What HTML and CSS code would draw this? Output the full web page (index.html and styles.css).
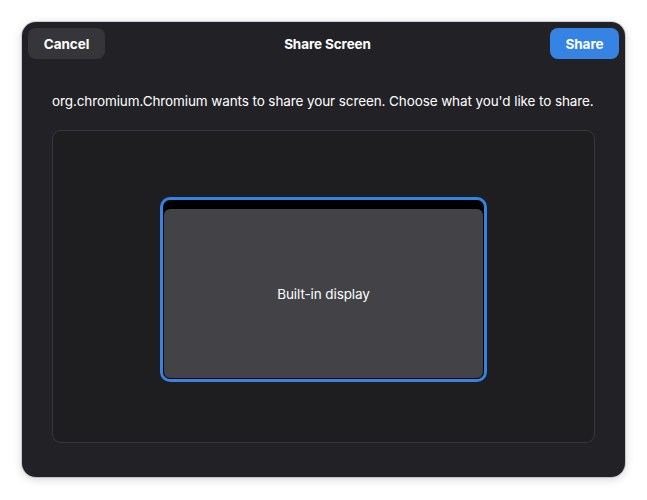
FILE: index.html
```html
<!DOCTYPE html>
<html>
<head>
<meta charset="utf-8">
<link rel="stylesheet" href="styles.css">
</head>
<body>
<div class="dialog">
  <header class="header">
    <button class="btn btn-cancel">Cancel</button>
    <div class="title">Share Screen</div>
    <button class="btn btn-share">Share</button>
  </header>
  <div class="content">
    <p class="message">org.chromium.Chromium wants to share your screen. Choose what you'd like to share.</p>
    <div class="sources">
      <div class="monitor">
        <div class="screen">Built-in display</div>
      </div>
    </div>
  </div>
</div>
</body>
</html>
```
FILE: styles.css
```css
html, body {
  margin: 0;
  padding: 0;
  background: #ffffff;
}
body {
  font-family: "Inter", "Noto Sans", sans-serif;
  width: 647px;
  height: 500px;
  overflow: hidden;
}
.dialog {
  box-sizing: border-box;
  margin: 22px 0 0 22px;
  width: 603px;
  height: 455px;
  background: #222226;
  border-radius: 14px;
  box-shadow: 0 0 0 1px rgba(0,0,0,0.14), 0 2px 10px rgba(0,0,0,0.18);
  display: flex;
  flex-direction: column;
  color: #ffffff;
}
.header {
  display: flex;
  align-items: center;
  justify-content: space-between;
  padding: 6px;
  height: 43px;
  box-sizing: border-box;
}
.btn {
  height: 31px;
  border: none;
  border-radius: 8px;
  font-family: "Inter", "Noto Sans", sans-serif;
  font-weight: 700;
  font-size: 13.5px;
  letter-spacing: -0.05px;
  color: #ffffff;
  padding: 0;
}
.btn-cancel {
  background: #36363a;
  width: 77px;
}
.btn-share {
  background: #3584e4;
  width: 69px;
}
.title {
  font-weight: 700;
  font-size: 13.5px;
  letter-spacing: -0.1px;
}
.content {
  flex: 1;
  display: flex;
  flex-direction: column;
  padding: 0 30px 34px 30px;
}
.message {
  margin: 26px 0 19px 0;
  font-size: 13.5px;
  letter-spacing: -0.1px;
  line-height: 20px;
  color: #ffffff;
  white-space: nowrap;
}
.sources {
  flex: 1;
  border: 1px solid #38383c;
  border-radius: 9px;
  background: #1e1e20;
  display: flex;
  align-items: center;
  justify-content: center;
  padding-top: 6px;
}
.monitor {
  box-sizing: border-box;
  width: 327px;
  height: 185px;
  border: 3px solid #3584e4;
  border-radius: 10px;
  background: #000000;
  padding: 9px 1px 1px 1px;
  display: flex;
}
.screen {
  flex: 1;
  background: #434347;
  border-radius: 6px;
  display: flex;
  align-items: center;
  justify-content: center;
  font-size: 13.5px;
  letter-spacing: -0.1px;
  color: #ffffff;
}
```
